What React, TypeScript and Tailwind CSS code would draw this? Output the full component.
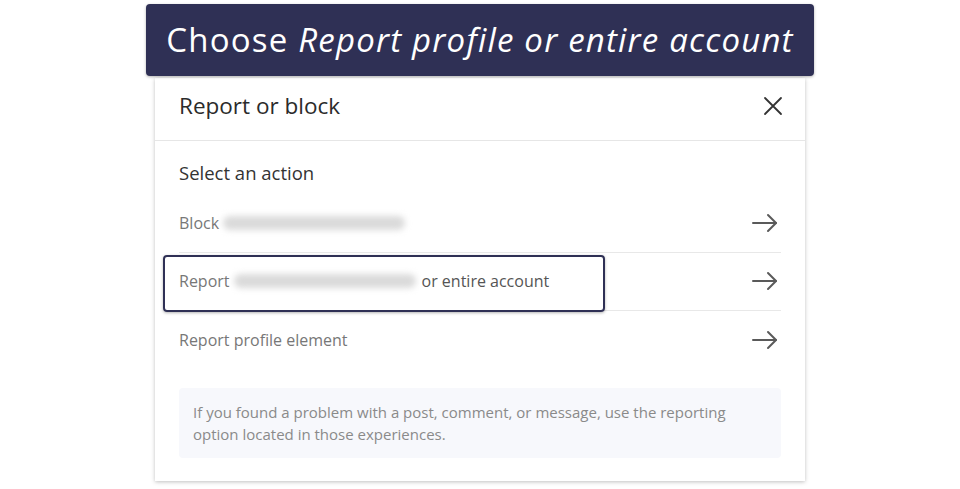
import React from "react";

const Arrow = () => (
  <svg width="28" height="20" viewBox="0 0 28 20" fill="none" stroke="#5a5a5a" strokeWidth="2" strokeLinecap="round" strokeLinejoin="round">
    <path d="M2 10h23" />
    <path d="M17 2l8 8-8 8" />
  </svg>
);

const Blur = ({ w }: { w: number }) => (
  <span
    className="inline-block h-[14px] rounded-full bg-[#dadada] blur-[3px] align-middle"
    style={{ width: w }}
  />
);

export default function App() {
  return (
    <div className="w-[960px] h-[489px] bg-white relative overflow-hidden font-['Open_Sans',sans-serif]">
      <div className="flex justify-center pt-[4px]">
        <div className="w-[668px] h-[72px] rounded-[4px] bg-[#2f3055] flex items-center justify-center shadow-[0_1px_3px_rgba(0,0,0,0.3)] z-10">
          <span className="text-white text-[33px] tracking-[1.2px] font-['Open_Sans',sans-serif]">
            Choose <i>Report profile or entire account</i>
          </span>
        </div>
      </div>

      <div className="absolute left-[155px] top-[78px] w-[650px] h-[403px] bg-white shadow-[0_1px_4px_rgba(0,0,0,0.25)]">
        <div className="h-[63px] flex items-center justify-between pl-[24px] pr-[22px] border-b border-[#e6e6e6] pb-[6px]">
          <span className="text-[22.5px] text-[#2b2b2b]">Report or block</span>
          <svg width="20" height="20" viewBox="0 0 20 20" stroke="#333" strokeWidth="1.8" strokeLinecap="round">
            <path d="M2 2l16 16M18 2L2 18" />
          </svg>
        </div>

        <div className="px-[24px]">
          <div className="pt-[18px] text-[18.5px] text-[#333]">Select an action</div>

          <div className="mt-[8px]">
            <div className="h-[58px] flex items-center justify-between border-b border-[#e8e8e8] pr-[2px]">
              <span className="text-[16px] text-[#777] flex items-center gap-[4px]">
                Block <Blur w={182} />
              </span>
              <Arrow />
            </div>
            <div className="relative h-[58px] flex items-center justify-between border-b border-[#e8e8e8] pr-[2px]">
              <div className="absolute left-[-16px] top-[2px] w-[442px] h-[57px] rounded-[4px] border-2 border-[#2f3055] shadow-[0_1px_3px_rgba(0,0,0,0.3)]" />
              <span className="text-[16px] text-[#777] flex items-center gap-[4px]">
                Report <Blur w={182} /> <span className="text-[#555] ml-[2px]">or entire account</span>
              </span>
              <Arrow />
            </div>
            <div className="h-[58px] flex items-center justify-between pr-[2px]">
              <span className="text-[16px] text-[#777]">Report profile element</span>
              <Arrow />
            </div>
          </div>

          <div className="mt-[19px] h-[70px] rounded-[4px] bg-[#f7f8fc] px-[14px] flex items-center text-[15px] leading-[22px] text-[#8a8a8a]">
            If you found a problem with a post, comment, or message, use the reporting option located in those experiences.
          </div>
        </div>
      </div>
    </div>
  );
}
